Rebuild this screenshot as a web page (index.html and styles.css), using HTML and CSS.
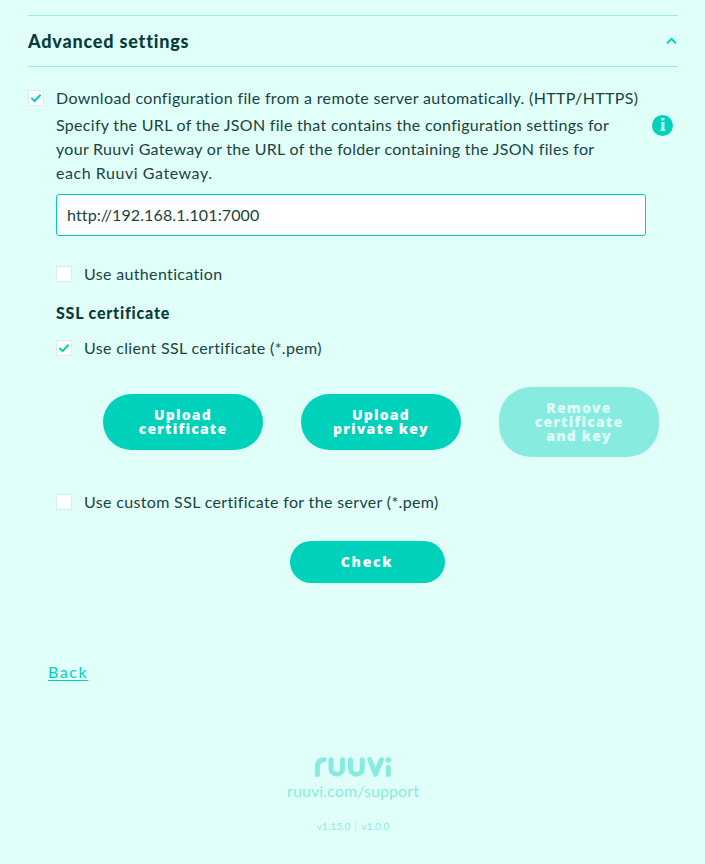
FILE: index.html
```html
<!DOCTYPE html>
<html lang="en">
<head>
<meta charset="utf-8">
<title>Ruuvi Gateway</title>
<link rel="stylesheet" href="styles.css">
</head>
<body>
<main class="page">
  <header class="section-head">
    <h2 class="section-title">Advanced settings</h2>
    <svg class="chevron" width="12" height="8" viewBox="0 0 12 8"><path d="M1 6.400 5.500 2l4.500 4.400"/></svg>
  </header>

  <label class="check-row row-download">
    <span class="box"><svg width="16" height="16" viewBox="0 0 16 16"><path d="M3.300 8 6.600 11 12.600 4.700"/></svg></span>
    <span>Download configuration file from a remote server automatically. (HTTP/HTTPS)</span>
  </label>

  <section class="details">
    <div class="describe">
      <p class="description">Specify the URL of the JSON file that contains the configuration settings for<br>your Ruuvi Gateway or the URL of the folder containing the JSON files for<br><span class="last-line">each Ruuvi Gateway.</span></p>
      <svg class="info" width="21" height="21" viewBox="0 0 21 21"><circle class="disc" cx="10.500" cy="10.500" r="10.500"/><path class="mark" d="M9.300 3h3.200v2.400H9.300zM9 7h3.500v7.500h.8V16H8.400v-1.500h1v-6H9z"/></svg>
    </div>
    <input class="url" type="text" value="http://192.168.1.101:7000">
    <label class="check-row row-auth"><span class="box"></span><span>Use authentication</span></label>
    <h3 class="sub-title">SSL certificate</h3>
    <label class="check-row row-client">
      <span class="box"><svg width="16" height="16" viewBox="0 0 16 16"><path d="M3.300 8 6.600 11 12.600 4.700"/></svg></span>
      <span>Use client SSL certificate (*.pem)</span>
    </label>
    <div class="actions">
      <button class="btn">Upload<br>certificate</button>
      <button class="btn">Upload<br>private key</button>
      <button class="btn" disabled>Remove<br>certificate<br>and key</button>
    </div>
    <label class="check-row row-custom"><span class="box"></span><span>Use custom SSL certificate for the server (*.pem)</span></label>
  </section>

  <div class="submit"><button class="btn btn-check">Check</button></div>
  <a class="back" href="#">Back</a>

  <footer class="footer">
    <svg class="logo" width="78" height="22" viewBox="0 0 78 22">
      <path d="M3.400 18.500v-8q0-6.600 6.800-6.800M17 3.700v8.700a5.800 5.800 0 0 0 11.600 0V3.700M36.500 3.700v8.700a5.900 5.900 0 0 0 11.800 0V3.700M55.800 3.700l5.700 14.600 6-14.600M74.300 11.500v7"/>
      <circle cx="74.300" cy="4" r="2.800"/>
    </svg>
    <a class="support">ruuvi.com/support</a>
    <p class="version"><span>v1.15.0</span><i class="bar"></i><span>v1.0.0</span></p>
  </footer>
</main>
</body>
</html>
```

FILE: styles.css
```css
* { box-sizing: border-box; }

body {
  margin: 0;
  background: #e1fff9;
  color: #184343;
  font: 16px/24px Lato, "Open Sans", sans-serif;
}

.page {
  width: 650px;
  margin: 0 0 0 28px;
  padding-top: 15px;
}

.section-head {
  display: flex;
  align-items: center;
  justify-content: space-between;
  height: 52px;
  border-top: 1px solid #9feade;
  border-bottom: 1px solid #9feade;
}

.section-title,
.sub-title {
  margin: 0;
  color: #083c3d;
  font-weight: 900;
  letter-spacing: 0.8px;
}

.section-title { font-size: 18px; }

.chevron {
  fill: none;
  stroke: #00d1bb;
  stroke-width: 2;
}

.check-row {
  display: flex;
  align-items: center;
  gap: 12px;
  height: 24px;
  letter-spacing: 0.34px;
  white-space: nowrap;
}

.box {
  flex: none;
  width: 16px;
  height: 16px;
  background: #fff;
  border: 1px solid #d5f0eb;
}

.box svg {
  display: block;
  margin: -1px;
  fill: none;
  stroke: #00d1bb;
  stroke-width: 2;
}

.row-download { margin-top: 19px; }
.details { margin-left: 28px; }

.describe {
  display: flex;
  justify-content: space-between;
  padding: 3px 5px 0 0;
}

.description {
  margin: 0;
  letter-spacing: 0.3px;
  white-space: nowrap;
}

.last-line { letter-spacing: 0.55px; }
.info { margin-top: 2px; }
.disc { fill: #00d1bb; }
.mark { fill: #b9f6eb; }

.url {
  display: block;
  width: 590px;
  height: 42px;
  margin-top: 9px;
  padding: 0 10px 2px;
  background: #fff;
  border: 1px solid #00ccb8;
  border-radius: 3px;
  color: #184343;
  font: inherit;
  letter-spacing: 0.12px;
}

.row-auth { margin-top: 26px; }
.sub-title { margin-top: 15px; font-size: 16px; }
.row-client { margin-top: 11px; }

.actions {
  display: flex;
  align-items: center;
  gap: 38px;
  margin: 27px 0 0 47px;
}

.btn {
  flex: none;
  width: 160px;
  padding: 14px 20px;
  background: #00d1bb;
  border: 0;
  border-radius: 32px;
  color: #fff;
  font: 800 14px/14px "Open Sans", sans-serif;
  letter-spacing: 1.200px;
}

.btn:disabled { background: #87ecdf; color: #e1fff9; }
.row-custom { margin-top: 33px; }

.submit {
  display: flex;
  justify-content: center;
  margin: 27px 0 0 28px;
}

.btn-check {
  width: 155px;
  height: 42px;
  letter-spacing: 1.700px;
}

.back {
  display: block;
  width: max-content;
  margin: 77px 0 0 20px;
  color: #00d1bb;
  letter-spacing: 1.600px;
  text-underline-offset: 2px;
}

.footer {
  display: flex;
  flex-direction: column;
  align-items: center;
  margin-top: 72px;
  color: #87ecdf;
}

.logo {
  fill: none;
  stroke: #87ecdf;
  stroke-width: 5;
  stroke-linecap: round;
  stroke-linejoin: round;
}

.logo circle { fill: #87ecdf; stroke: none; }

.support {
  margin-top: 1px;
  letter-spacing: 0.1px;
}

.version {
  display: flex;
  align-items: center;
  gap: 5px;
  margin: 11px 0 0;
  font-size: 10px;
  letter-spacing: 0.1px;
}

.bar { width: 1px; height: 11px; background: #c3f6ed; }
```
